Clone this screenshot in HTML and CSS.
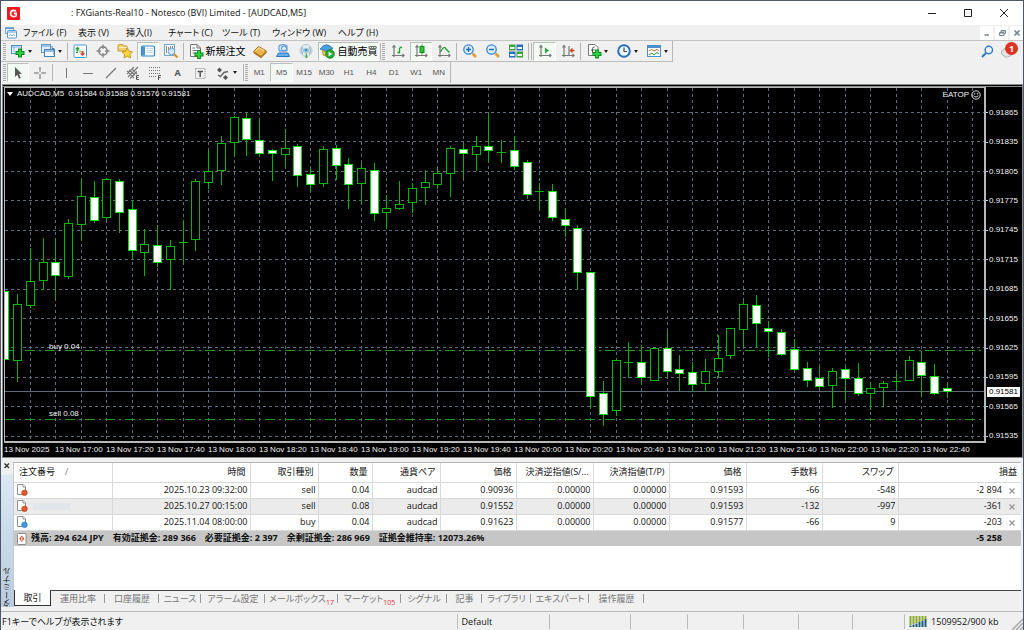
FILE: index.html
```html
<!DOCTYPE html>
<html lang="ja">
<head>
<meta charset="utf-8">
<title>FXGiants-Real10 - Notesco (BVI) Limited - [AUDCAD,M5]</title>
<link rel="stylesheet" href="styles.css">
</head>
<body>
<div class="window">
  <header class="titlebar">
    <svg class="logo" viewBox="0 0 13 13"><rect width="13" height="13" rx="1" fill="#f0191c"/><path d="M9 4.6Q8 3.4 6.4 3.4 3.6 3.6 3.6 6.5 3.7 9.5 6.5 9.6 8 9.6 9.2 8.9V6.4H6.8" fill="none" stroke="#fff" stroke-width="1.6"/></svg>
    <h1 class="caption">: FXGiants-Real10 - Notesco (BVI) Limited - [AUDCAD,M5]</h1>
    <div class="winbtns">
      <button aria-label="最小化"><svg viewBox="0 0 10 10"><path d="M1 5.5H9" /></svg></button>
      <button aria-label="最大化"><svg viewBox="0 0 10 10"><path d="M1.5 1.5H8.5V8.5H1.5Z" /></svg></button>
      <button aria-label="閉じる"><svg viewBox="0 0 10 10"><path d="M1 1L9 9M9 1L1 9" /></svg></button>
    </div>
  </header>

  <nav class="menubar">
    <svg class="menuicon" viewBox="0 0 12 12"><rect x=".5" y=".5" width="8" height="6" fill="#e8f2fa" stroke="#7aa9d2"/><path d="M1 1.5H8" stroke="#5b97cf"/><rect x="2.5" y="3.5" width="9" height="7.5" rx="1" fill="#fff" stroke="#5b97cf"/><path d="M3 5H11" stroke="#5b97cf"/><path d="M4 9L5.5 7 7 9 8.500 7 10 9" fill="none" stroke="#8db8dc"/></svg>
    <button class="m1">ファイル (F)</button><button class="m2">表示 (V)</button><button class="m3">挿入(I)</button><button class="m4">チャート (C)</button><button class="m5">ツール (T)</button><button class="m6">ウィンドウ (W)</button><button class="m7">ヘルプ (H)</button>
    <div class="mdi">
      <button aria-label="チャート最小化"><svg viewBox="0 0 8 8"><path d="M1.500 6H6" stroke-width="1.500"/></svg></button>
      <button aria-label="チャート復元"><svg viewBox="0 0 8 8"><path d="M3 3V1.500H7.500V4.500H6M2 3.500H6V6.500H1.500V3.500M1.500 4H6M3 2H7" /></svg></button>
      <button aria-label="チャートを閉じる"><svg viewBox="0 0 8 8"><path d="M1.500 1.500L6.500 6.500M6.500 1.500L1.500 6.500" stroke-width="1.600"/></svg></button>
    </div>
  </nav>

  <div class="toolbars">
    <div class="toolbar">
      <div class="band upper">
      <i class="grip"></i>
      <div class="group g-new">
        <button class="drop" aria-label="新規チャート"><svg viewBox="0 0 16 16"><rect x="1.500" y="2.500" width="10" height="8" fill="#eef6fc" stroke="#4f8fc8"/><path d="M2 4H11M4 4V9" stroke="#7fb0da"/><path d="M10 5.500V14.500M5.500 10H14.500" stroke="#0b8a1b" stroke-width="4"/><path d="M10 6.500V13.500M6.500 10H13.500" stroke="#2fd043" stroke-width="2"/></svg><i class="caret"></i></button>
        <button class="drop" aria-label="プロファイル"><svg viewBox="0 0 16 16"><rect x="1.500" y="1.500" width="9" height="8" fill="#dfeefa" stroke="#5f98cc"/><path d="M2 3H10" stroke="#5f98cc"/><rect x="4.500" y="6.500" width="10" height="7" fill="#f4f9fd" stroke="#4381bf"/><path d="M5 8H14" stroke="#4381bf"/><path d="M12 3V5.500H14V12" stroke="#4381bf" fill="none"/></svg><i class="caret"></i></button>
      </div>
      <i class="sep"></i>
      <div class="group g-view">
        <button aria-label="気配値表示"><svg viewBox="0 0 16 16"><rect x="2" y="2" width="12.500" height="12.500" rx="1" fill="#fff" stroke="#4f9bd6"/><path d="M5.500 3.500L8 6.200H6.500V8.500H4.500V6.200H3Z" fill="#1aa32c"/><path d="M8 7.500V9.500M4 9.500H6" stroke="#1aa32c"/><path d="M10.500 13L7.800 10.500H9.500V8H11.500V10.500H13.200Z" fill="#df3a2a"/></svg></button>
        <button aria-label="データウィンドウ"><svg viewBox="0 0 16 16"><circle cx="8" cy="8" r="4.200" fill="none" stroke="#888" stroke-width="1.700"/><path d="M8 1.500V6M8 10V14.500M1.500 8H6M10 8H14.500" stroke="#888" stroke-width="1.400"/></svg></button>
        <button aria-label="ナビゲーター"><svg viewBox="0 0 16 16"><path d="M1 3Q1 1.500 3 1.500H6L7 3H10V8H1Z" fill="#f5cf6b" stroke="#b98a2c" stroke-width=".8"/><path d="M2 4.500H10" stroke="#fff0b8"/><path d="M10.300 4.800L12.100 8.300 15.500 8.800 13 11.300 13.600 15 10.300 13.200 7 15 7.600 11.300 5 8.800 8.500 8.300Z" fill="#fbd63c" stroke="#ba8412" stroke-width=".8"/></svg></button>
        <button class="on" aria-label="ターミナル"><svg viewBox="0 0 16 16"><rect x="1.500" y="3" width="13" height="10" rx="1" fill="#f5faff" stroke="#3f88c5" stroke-width="1.200"/><rect x="2" y="3.500" width="3" height="9" fill="#4b93d0"/><path d="M6.500 5.500H13M6.500 7.500H13M6.500 9.500H13" stroke="#c4dcf0"/></svg></button>
        <button aria-label="ストラテジーテスター"><svg viewBox="0 0 16 16"><rect x="1.500" y="1.500" width="10" height="11" fill="#f4f9fd" stroke="#74a6d2"/><path d="M3.500 3V10M5.500 4V7M7.500 3V8M9.500 3V6" stroke="#888"/><circle cx="8.500" cy="8.500" r="3.300" fill="#cde7f8" fill-opacity=".8" stroke="#6fa6d0"/><path d="M11 11L14.500 14.500" stroke="#cf9a2c" stroke-width="2.200"/></svg></button>
      </div>
      <i class="sep"></i>
      <div class="group g-order">
        <button class="text t-order"><svg viewBox="0 0 16 16"><path d="M2.500 1.500H9L12.500 5V13.500H2.500Z" fill="#fafafa" stroke="#777"/><path d="M9 1.500V5H12.500M4.500 5H7M4.500 7.500H9M4.500 10H8" stroke="#777" fill="none"/><path d="M11 7V16M6.500 11.500H15.500" stroke="#0b8a1b" stroke-width="3.800"/><path d="M11 8V15M7.500 11.500H14.500" stroke="#2fd043" stroke-width="2"/></svg>新規注文</button>
        <button aria-label="メタエディター"><svg viewBox="0 0 16 16"><path d="M1.500 8.500L6.500 3.500 14.500 8 9 13.500Z" fill="#e8b54a" stroke="#a9711a"/><path d="M3.500 8L7 4.800 12 7.600" stroke="#ffe5a0" fill="none"/><path d="M1.500 9.500L9 14.500 14.500 9" stroke="#a9711a" fill="none" stroke-width="1.200"/></svg></button>
        <button aria-label="MQL5コミュニティ"><svg viewBox="0 0 16 16"><path d="M4 2.500Q8 .5 12 2.500V8H4Z" fill="#c8e2f6" stroke="#4f8fd0"/><circle cx="9" cy="5.500" r="2.500" fill="#d8ebfa" stroke="#4a8fd5"/><path d="M1.500 13.500L3.500 10H13L14.500 13.500Z" fill="#67aee8" stroke="#2f76c0"/></svg></button>
        <button aria-label="シグナル"><svg viewBox="0 0 16 16"><circle cx="8" cy="7.500" r="6" fill="#e1edf2" stroke="#b7c8d2"/><path d="M4.500 4Q2.500 7.500 4.500 11M6.300 5.300Q5 7.500 6.300 9.700M11.500 4Q13.500 7.500 11.500 11M9.700 5.300Q11 7.500 9.700 9.700" fill="none" stroke="#7fa6bd"/><circle cx="8" cy="7" r="1.500" fill="#3b8bc4"/><path d="M8 7.500L9.500 15H7.500Z" fill="#3aa84c"/></svg></button>
        <button class="text on t-auto"><svg viewBox="0 0 16 16"><path d="M1 6Q3 4 4 3 8 .5 11 3L14 5.500 8 8.500Z" fill="#4b9fe0" stroke="#2670b0" stroke-width=".8"/><path d="M3.500 7.500L8 9.500 12 7.500V12Q7 14.500 4 12Z" fill="#f1c75a" stroke="#b48620" stroke-width=".8"/><circle cx="11" cy="11" r="4.200" fill="#27b138" stroke="#0e8420"/><path d="M9.600 8.800L13.200 11 9.600 13.200Z" fill="#fff"/></svg>自動売買</button>
      </div>
      <i class="sep"></i><i class="grip"></i>
      <div class="group g-type">
        <button aria-label="バーチャート"><svg viewBox="0 0 16 16"><path class="ax" d="M4 3V14M2 12.500H14M2.500 4.500L4 2.500 5.500 4.500M12.500 11L14 12.500 12.500 14"/><path d="M9.500 5V10.500M7.500 9.500H9.500M9.500 4.500H12" stroke="#19a12d" stroke-width="1.300"/></svg></button>
        <button class="on" aria-label="ローソク足"><svg viewBox="0 0 16 16"><path class="ax" d="M4 3V14M2 12.500H14M2.500 4.500L4 2.500 5.500 4.500M12.500 11L14 12.500 12.500 14"/><path d="M9 1.500V11.500" stroke="#138a22"/><rect x="7" y="3.500" width="4" height="6" fill="#2fc441" stroke="#138a22"/></svg></button>
        <button aria-label="ラインチャート"><svg viewBox="0 0 16 16"><path class="ax" d="M4 3V14M2 12.500H14M2.500 4.500L4 2.500 5.500 4.500M12.500 11L14 12.500 12.500 14"/><path d="M4.500 9Q8 2 10 6L13.500 9.500" fill="none" stroke="#19a12d" stroke-width="1.300"/></svg></button>
      </div>
      <i class="sep"></i>
      <div class="group g-zoom">
        <button aria-label="ズームイン"><svg viewBox="0 0 16 16"><path d="M10.500 10.500L14 14" stroke="#d9a431" stroke-width="2.600"/><circle cx="6.500" cy="6.500" r="4.700" fill="#d9eefb" stroke="#3a86cc" stroke-width="1.300"/><path d="M4 6.500H9M6.500 4V9" stroke="#2472bc" stroke-width="1.500"/></svg></button>
        <button aria-label="ズームアウト"><svg viewBox="0 0 16 16"><path d="M10.500 10.500L14 14" stroke="#d9a431" stroke-width="2.600"/><circle cx="6.500" cy="6.500" r="4.700" fill="#d9eefb" stroke="#3a86cc" stroke-width="1.300"/><path d="M4 6.500H9" stroke="#2472bc" stroke-width="1.500"/></svg></button>
        <button aria-label="チャートを整列"><svg viewBox="0 0 16 16"><rect x="1" y="1.500" width="6.500" height="6" fill="#3fa535"/><rect x="8.500" y="1.500" width="6.500" height="6" fill="#2b6fc4"/><rect x="1" y="8.500" width="6.500" height="6" fill="#2b6fc4"/><rect x="8.500" y="8.500" width="6.500" height="6" fill="#3fa535"/><path d="M2 5H6.500M9.500 5H14M2 12H6.500M9.500 12H14" stroke="#eef8ff" stroke-width="2.200"/></svg></button>
      </div>
      <i class="sep"></i><i class="sep"></i>
      <div class="group g-shift">
        <button class="on" aria-label="自動スクロール"><svg viewBox="0 0 16 16"><path class="ax" d="M4 3V14M2 12.500H14M2.500 4.500L4 2.500 5.500 4.500M12.500 11L14 12.500 12.500 14"/><path d="M8 4.500L12 7.500 8 10.500Z" fill="#1fae34"/></svg></button>
        <button aria-label="チャートシフト"><svg viewBox="0 0 16 16"><path class="ax" d="M4 3V14M2 12.500H14M2.500 4.500L4 2.500 5.500 4.500M12.500 11L14 12.500 12.500 14M9 3V12"/><path d="M14.500 7.500H10.500M12.500 5.500L10.500 7.500 12.500 9.500" stroke="#c5481c" fill="none" stroke-width="1.300"/></svg></button>
      </div>
      <i class="sep"></i>
      <div class="group g-tmpl">
        <button class="drop" aria-label="インディケータ"><svg viewBox="0 0 16 16"><path d="M2.500 1.500H9L12 4.500V12.500H2.500Z" fill="#fafafa" stroke="#777"/><path d="M6.500 10V5.500Q6.500 4 8.500 4M5 7H8.500" stroke="#555" fill="none"/><path d="M11 6.500V15.500M6.500 11H15.500" stroke="#0b8a1b" stroke-width="3.800"/><path d="M11 7.500V14.500M7.500 11H14.500" stroke="#2fd043" stroke-width="2"/></svg><i class="caret"></i></button>
        <button class="drop" aria-label="時間足設定"><svg viewBox="0 0 16 16"><circle cx="8" cy="8" r="5.800" fill="#eaf5fd" stroke="#2c6fb8" stroke-width="2"/><path d="M8 4.500V8.500H11" stroke="#445" fill="none" stroke-width="1.200"/></svg><i class="caret"></i></button>
        <button class="drop" aria-label="定型チャート"><svg viewBox="0 0 16 16"><rect x="1.500" y="2.500" width="13" height="11" fill="#f7fbff" stroke="#4f8fc8"/><path d="M2 4H14" stroke="#4f8fc8" stroke-width="2"/><path d="M3 8L5.500 6.500 8 8 11 6.500 13 7.500" stroke="#c5702c" fill="none"/><path d="M3 12L6 10 8 12 11 9.500 13 11" stroke="#2d9a3c" fill="none"/></svg><i class="caret"></i></button>
      </div>
      </div>
      <div class="right">
        <button aria-label="検索"><svg viewBox="0 0 16 16"><circle cx="9.800" cy="6" r="3.700" fill="#eef6fd" stroke="#2f74c6" stroke-width="1.400"/><path d="M7 9L3 13" stroke="#2f74c6" stroke-width="2.200"/></svg></button>
        <button class="news" aria-label="通知 1"><svg viewBox="0 0 16 16"><ellipse cx="7" cy="8.500" rx="5.500" ry="4.200" fill="#e4e4e4" stroke="#a9a9a9"/><path d="M5 12L5.500 15 9 12Z" fill="#d0d0d0"/></svg><span class="badge">1</span></button>
      </div>
    </div>

    <div class="toolbar">
      <div class="band">
      <i class="grip"></i>
      <div class="group g-cur">
        <button class="on" aria-label="カーソル"><svg viewBox="0 0 16 16"><path d="M5 2L12 9H9L10.700 13 9 13.800 7.300 9.800 5 12Z" fill="#555"/></svg></button>
        <button aria-label="クロスヘア"><svg viewBox="0 0 16 16"><path d="M8 2V6.800M8 9.200V14M2 8H6.800M9.200 8H14" stroke="#666"/></svg></button>
      </div>
      <i class="sep"></i>
      <div class="group g-draw">
        <button aria-label="垂直線"><svg viewBox="0 0 16 16"><path d="M8.500 3V13" stroke="#777"/></svg></button>
        <button aria-label="水平線"><svg viewBox="0 0 16 16"><path d="M3 8.500H13" stroke="#777"/></svg></button>
        <button aria-label="トレンドライン"><svg viewBox="0 0 16 16"><path d="M3 13L13 3" stroke="#777" stroke-width="1.200"/></svg></button>
        <button aria-label="等距離チャネル"><svg viewBox="0 0 16 16"><path d="M2 9L9 2M3 12L13 2M5 13.500L12 6.500M2 6L9 13M4 5L10 10M7 4L12 9" stroke="#777" stroke-width="1.100"/><path d="M14 10.500H11.500V14.500H14M11.500 12.500H13.500" stroke="#555" fill="none"/></svg></button>
        <button aria-label="フィボナッチ"><svg viewBox="0 0 16 16"><path d="M2 2.500H14M2 5.500H14M2 8.500H14M2 11.500H9" stroke="#777" stroke-dasharray="1 1"/><path d="M14 10.500H11.500V15M11.500 12.500H13.500" stroke="#555" fill="none"/></svg></button>
        <button class="letter">A</button>
        <button aria-label="テキストラベル"><svg viewBox="0 0 16 16"><rect x="3.500" y="3.500" width="9.500" height="10" fill="none" stroke="#888" stroke-dasharray="1 1"/><path d="M5.500 6.500H11M8.200 6.500V12" stroke="#555" stroke-width="1.500"/></svg></button>
        <button class="drop" aria-label="矢印"><svg viewBox="0 0 16 16"><path d="M2 5L4.500 2.500 7 5 4.500 7.500ZM8 12.500L10.500 10 13 12.500 10.500 15Z" fill="#555"/><path d="M3 10L5.500 11.500 9 7.500 13 6.500" fill="none" stroke="#666" stroke-width="1.400"/></svg><i class="caret"></i></button>
      </div>
      <i class="sep"></i><i class="grip"></i>
      <div class="group g-tf">
        <button>M1</button><button class="on">M5</button><button>M15</button><button>M30</button><button>H1</button><button>H4</button><button>D1</button><button>W1</button><button>MN</button>
      </div>
      </div>
    </div>
  </div>

  <main class="chart">
    <div class="plot">
      <svg id="plot" viewBox="5 88 979 353" preserveAspectRatio="none"></svg>
      <p class="symbol"><i class="caret light"></i><span>AUDCAD,M5</span><span>0.91584 0.91588 0.91576 0.91581</span></p>
      <p class="expert">EATOP <svg viewBox="0 0 10 10"><circle cx="5" cy="5" r="4.200"/><circle cx="3.500" cy="3.800" r=".4"/><circle cx="6.500" cy="3.800" r=".4"/><path d="M2.500 5.800Q5 8.500 7.500 5.800"/></svg></p>
      <p class="order buy">buy 0.04</p>
      <p class="order sell">sell 0.08</p>
    </div>
    <ol class="prices">
      <li>0.91865</li><li>0.91835</li><li>0.91805</li><li>0.91775</li><li>0.91745</li><li>0.91715</li><li>0.91685</li><li>0.91655</li><li>0.91625</li><li>0.91595</li><li>0.91565</li><li>0.91535</li>
      <li class="current">0.91581</li>
    </ol>
    <ol class="times">
      <li>13 Nov 2025</li><li>13 Nov 17:00</li><li>13 Nov 17:20</li><li>13 Nov 17:40</li><li>13 Nov 18:00</li><li>13 Nov 18:20</li><li>13 Nov 18:40</li><li>13 Nov 19:00</li><li>13 Nov 19:20</li><li>13 Nov 19:40</li><li>13 Nov 20:00</li><li>13 Nov 20:20</li><li>13 Nov 20:40</li><li>13 Nov 21:00</li><li>13 Nov 21:20</li><li>13 Nov 21:40</li><li>13 Nov 22:00</li><li>13 Nov 22:20</li><li>13 Nov 22:40</li>
    </ol>
  </main>

  <section class="terminal">
    <aside class="side">
      <button aria-label="ターミナルを閉じる"><svg viewBox="0 0 8 8"><path d="M1.500 1.500L6 6M6 1.500L1.500 6" stroke="#333" stroke-width="1.400"/></svg></button>
      <span>ターミナル</span>
    </aside>
    <div class="pane">
      <table class="trades">
        <colgroup><col class="c98"><col class="c138"><col class="c68"><col class="c54"><col class="c68"><col class="c76"><col class="c77"><col class="c76"><col class="c77"><col class="c76"><col class="c76"><col></colgroup>
        <thead><tr><th class="first">注文番号<span class="sort">/</span></th><th>時間</th><th>取引種別</th><th>数量</th><th>通貨ペア</th><th>価格</th><th>決済逆指値(S/...</th><th>決済指値(T/P)</th><th>価格</th><th>手数料</th><th>スワップ</th><th>損益</th></tr></thead>
        <tbody>
          <tr><td class="first"><svg viewBox="0 0 12 12"><path class="doc" d="M1.500.5H7L9.500 3V10.500H1.500Z"/><path class="doc" d="M7 .5V3H9.500"/><circle cx="8.500" cy="8.800" r="2.800" fill="#e2572b" stroke="#b23c12" stroke-width=".6"/></svg></td><td>2025.10.23 09:32:00</td><td>sell</td><td>0.04</td><td>audcad</td><td>0.90936</td><td>0.00000</td><td>0.00000</td><td>0.91593</td><td>-66</td><td>-548</td><td>-2 894<button class="x" aria-label="決済"><svg viewBox="0 0 8 8"><path d="M1.500 1.500L6.500 6.500M6.500 1.500L1.500 6.500"/></svg></button></td></tr>
          <tr class="alt"><td class="first"><svg viewBox="0 0 12 12"><path class="doc" d="M1.500.5H7L9.500 3V10.500H1.500Z"/><path class="doc" d="M7 .5V3H9.500"/><circle cx="8.500" cy="8.800" r="2.800" fill="#e2572b" stroke="#b23c12" stroke-width=".6"/></svg><span class="masked"></span></td><td>2025.10.27 00:15:00</td><td>sell</td><td>0.08</td><td>audcad</td><td>0.91552</td><td>0.00000</td><td>0.00000</td><td>0.91593</td><td>-132</td><td>-997</td><td>-361<button class="x" aria-label="決済"><svg viewBox="0 0 8 8"><path d="M1.500 1.500L6.500 6.500M6.500 1.500L1.500 6.500"/></svg></button></td></tr>
          <tr><td class="first"><svg viewBox="0 0 12 12"><path class="doc" d="M1.500.5H7L9.500 3V10.500H1.500Z"/><path class="doc" d="M7 .5V3H9.500"/><circle cx="8.500" cy="8.800" r="2.800" fill="#3d9be6" stroke="#1c6db5" stroke-width=".6"/></svg></td><td>2025.11.04 08:00:00</td><td>buy</td><td>0.04</td><td>audcad</td><td>0.91623</td><td>0.00000</td><td>0.00000</td><td>0.91577</td><td>-66</td><td>9</td><td>-203<button class="x" aria-label="決済"><svg viewBox="0 0 8 8"><path d="M1.500 1.500L6.500 6.500M6.500 1.500L1.500 6.500"/></svg></button></td></tr>
        </tbody>
        <tfoot><tr><td class="first" colspan="11"><svg viewBox="0 0 12 12"><rect x="1.500" y=".5" width="8.500" height="11" rx="1" fill="#fff" stroke="#8a8a8a"/><path d="M5.800 2.500L8.300 5.500 5.800 9 3.300 5.500Z" fill="#d6502a"/><path d="M5.800 4V7.500" stroke="#fff"/></svg><span>残高: 294 624 JPY</span><span>有効証拠金: 289 366</span><span>必要証拠金: 2 397</span><span>余剰証拠金: 286 969</span><span>証拠金維持率: 12073.26%</span></td><td>-5 258</td></tr></tfoot>
      </table>
      <div class="tabs" role="tablist">
        <button class="active" role="tab">取引</button><button role="tab">運用比率</button><button role="tab">口座履歴</button><button role="tab">ニュース</button><button role="tab">アラーム設定</button><button role="tab">メールボックス<sub>17</sub></button><button role="tab">マーケット<sub>105</sub></button><button role="tab">シグナル</button><button role="tab">記事</button><button role="tab">ライブラリ</button><button role="tab">エキスパート</button><button role="tab">操作履歴</button>
      </div>
    </div>
  </section>

  <footer class="status">
    <span>F1キーでヘルプが表示されます</span><span>Default</span><span></span><span></span><span></span><span></span><span></span>
    <span class="last"></span>
    <span class="net"><svg viewBox="0 0 19 11"><path d="M1.500 0V9M4.500 0V8M7.500 0V7M10.500 0V6M13.500 0V5M16.500 0V3" stroke="#8cab2e" stroke-width="2"/><path d="M1.500 9.500V11M4.500 8.500V11M7.500 7.500V11M10.500 6V11M13.500 5V11M16.500 3V11" stroke="#1d5d7c" stroke-width="2"/></svg>1509952/900 kb</span>
    <svg class="resize" viewBox="0 0 12 12"><path d="M1 12L12 1M5 12L12 5M9 12L12 9" stroke="#a6a6a6" stroke-width="1.500"/></svg>
  </footer>
</div>
<script src="chart.js"></script>
</body>
</html>
```
FILE: styles.css
```css
* { box-sizing: border-box; }
html, body { height: 100%; }
body { margin: 0; background: #f0f0f0; color: #111; font: 9px/12px "Open Sans", "Noto Sans CJK JP", sans-serif; font-feature-settings: "palt"; }
h1, p, ol { margin: 0; padding: 0; font: inherit; list-style: none; }
button { margin: 0; padding: 0; border: 0; background: none; color: inherit; font: inherit; font-feature-settings: inherit; white-space: nowrap; }
svg { display: block; flex: none; }
.window { display: flex; flex-direction: column; min-height: 100%; border: 1px solid #4c5664; border-width: 1px 1px 0; }

.titlebar { display: flex; align-items: center; height: 24px; padding: 0 1px 0 6px; background: #fff; }
.logo { width: 13px; height: 13px; }
.caption { flex: 1; padding-left: 51px; font-size: 9px; white-space: nowrap; }
.winbtns { display: flex; }
.winbtns button { display: grid; place-items: center; width: 36px; height: 24px; }
.winbtns svg { width: 10px; height: 10px; fill: none; stroke: #222; }

.menubar { display: flex; align-items: center; height: 16px; padding-left: 4px; border-bottom: 1px solid #c4c4c4; }
.menuicon { width: 12px; height: 12px; margin-right: 6px; }
.menubar > button { text-align: left; }
.m1 { width: 55px; }
.m2 { width: 48px; }
.m3 { width: 42px; }
.m4 { width: 54px; }
.m5 { width: 50px; }
.m6 { width: 66px; }
.mdi { display: flex; gap: 2px; margin-left: auto; }
.mdi button { display: grid; place-items: center; width: 13px; height: 14px; background: #fff; }
.mdi svg { width: 8px; height: 8px; fill: none; stroke: #75848f; }

.toolbars { padding-bottom: 1px; }
.toolbar { display: flex; align-items: center; height: 21px; padding-right: 7px; }
.band { display: flex; align-items: center; height: 21px; padding-left: 2px; border-right: 1px solid #b5b5b5; }
.band.upper { border-bottom: 1px solid #bcbcbc; }
.grip { width: 3px; height: 17px; background: repeating-linear-gradient(#aaa 0 1px, transparent 1px 2px); }
.sep { width: 1px; height: 17px; margin: 0 1px; background: #b5b5b5; }
.group { display: flex; align-items: center; height: 20px; }
.group button { display: flex; flex: 1; align-items: center; justify-content: center; height: 19px; border: 1px solid transparent; }
.group .on { border-color: #b9c0ba #fff #fff #b9c0ba; background: #f2faf3; }
.group svg { width: 16px; height: 16px; }
.caret { margin-left: 2px; border: 2px solid transparent; border-top: 3px solid #222; border-bottom: 0; }
.ax { fill: none; stroke: #777; stroke-width: 1.2; }
.g-new { width: 60px; }
.g-view { width: 113px; }
.g-order { width: 194px; }
.g-order .text { flex: none; gap: 2px; color: #000; font-size: 10px; font-feature-settings: normal; }
.g-order .t-order { width: 63px; }
.g-order .t-auto { width: 61px; }
.g-type { width: 68px; margin-left: 2px; }
.g-zoom { width: 68px; margin-left: 1px; }
.g-shift { width: 46px; }
.g-tmpl { width: 90px; }
.right { display: flex; gap: 5px; margin-left: auto; }
.right svg { width: 16px; height: 16px; }
.news { position: relative; }
.badge { position: absolute; top: -2px; left: 5px; width: 13px; height: 13px; border-radius: 50%; background: #dc3420; color: #fff; font-weight: 700; line-height: 13px; }
.g-cur { width: 44px; margin-left: 1px; }
.g-draw { width: 187px; margin-left: 1px; }
.g-draw .drop { flex: none; width: 31px; }
.g-draw .letter { color: #555; font-weight: 700; }
.g-tf { width: 202px; color: #555; font: 8px/12px "Liberation Sans", sans-serif; }

.chart { display: grid; flex: 1; grid-template: minmax(200px, 1fr) 14px / 1fr 36px; margin-left: 1px; padding-left: 1px; border: 1px solid #8b8f8b; border-top: 3px double #8b8f8b; background: #000; color: #f2f2f2; font: 8px/10px "Liberation Sans", sans-serif; }
.plot { position: relative; border: 1px solid #b8b8b8; border-width: 1px 2px 2px 1px; }
.plot > svg { position: absolute; inset: 0; width: 100%; height: 100%; }
.grid { fill: none; stroke: #5e6d7e; stroke-dasharray: 3 3; }
.wick { stroke: #00b400; }
.body { stroke: #00b800; fill: #000; }
.body.down { stroke: #00e000; fill: #fff; }
.level { stroke: #1f9a1f; stroke-dasharray: 10 4 2 4; }
.quote { stroke: #5d6a78; }
.symbol { position: absolute; top: 1px; left: 2px; display: flex; align-items: center; gap: 4px; }
.caret.light { margin: 0; border-width: 4px 3px 0; border-top-color: #fff; }
.expert { position: absolute; top: 2px; right: 3px; display: flex; align-items: center; gap: 2px; }
.expert svg { width: 10px; height: 10px; fill: none; stroke: #eee; stroke-width: .9; }
.order { position: absolute; left: 44px; }
.order.buy { top: 72%; }
.order.sell { top: 91%; }
.prices { position: relative; display: grid; grid-row: 1 / 3; grid-column: 2; grid-template-rows: repeat(12, 1fr); align-items: center; padding: 11px 0 6px; }
.prices li { display: flex; align-items: center; gap: 1px; }
.prices li::before { width: 2px; height: 1px; background: #ccc; content: ""; }
.prices .current { position: absolute; top: 81%; right: 2px; left: 1px; height: 10px; padding-left: 2px; background: #fff; color: #000; }
.prices .current::before { display: none; }
.times { display: grid; grid-template-columns: repeat(19, 51fr) 13fr; align-items: center; white-space: nowrap; }
.times li { width: 0; }

.terminal { display: flex; height: 153px; padding: 4px 2px 4px 0; }
.side { display: flex; flex-direction: column; align-items: center; justify-content: space-between; width: 12px; background: linear-gradient(#f0f0f0 12px, #dce8f4 13px, #b7cbdf); }
.side button svg { width: 8px; height: 8px; }
.side span { font-size: 8px; line-height: 10px; writing-mode: vertical-rl; rotate: 180deg; }
.pane { display: flex; flex: 1; flex-direction: column; min-width: 0; border-top: 1px solid #b5b5b5; border-left: 1px solid #c8c8c8; background: #fff; }
.trades { width: 100%; border-collapse: collapse; table-layout: fixed; }
.c54 { width: 54px; }
.c68 { width: 68px; }
.c76 { width: 76px; }
.c77 { width: 77px; }
.c98 { width: 98px; }
.c138 { width: 138px; }
.trades th, .trades td { height: 16px; padding: 0 2px 0 0; border-right: 1px solid #d9d9d9; border-bottom: 1px solid #d9d9d9; line-height: 12px; text-align: right; white-space: nowrap; }
.trades th { height: 19px; padding-right: 4px; font-weight: 400; }
.trades .first { text-align: left; }
.trades th.first { padding-left: 5px; }
.trades th:last-child, .trades td:last-child { border-right: 0; }
.trades tbody td:last-child { padding-right: 5px; }
.sort { margin-left: 10px; color: #777; }
.trades .first svg { display: inline-block; width: 12px; height: 12px; margin-left: 2px; vertical-align: middle; }
.doc { fill: #fff; stroke: #777; stroke-width: .8; }
.masked { display: inline-block; width: 37px; height: 7px; margin-left: 5px; background: #e2e6ea; vertical-align: middle; }
.alt { background: #ebebeb; }
.x { margin-left: 6px; vertical-align: middle; }
.x svg { width: 8px; height: 8px; stroke: #999; stroke-width: 1.400; }
.trades tfoot td { border: 0; background: #c6c6c6; font-weight: 700; }
.trades tfoot span { margin-left: 3px; }
.trades tfoot span + span { margin-left: 9px; }
.trades tfoot td:last-child { padding-right: 19px; }
.tabs { display: grid; grid-template-columns: 37px 54px 54px 42px 64px 73px 63px 46px 35px 49px 58px 55px; height: 17px; margin-top: auto; border-top: 1px solid #444; background: #f0f0f0; color: #777; }
.tabs button { position: relative; }
.tabs button:not(.active)::after { position: absolute; top: 3px; right: 0; width: 1px; height: 9px; background: #999; content: ""; }
.tabs .active { height: 16px; margin-top: -1px; border: 1px solid #333; border-top: 0; background: #fff; color: #111; }
.tabs sub { color: #f03030; font-size: 7px; line-height: 1; }

.status { display: grid; grid-template-columns: 457fr 93fr 81fr 57fr 56fr 55fr 54fr 52fr 104fr 14fr; height: 19px; align-items: center; border-top: 1px solid #bbb; }
.status > span { height: 15px; padding-left: 1px; border-right: 1px solid #bbb; line-height: 15px; white-space: nowrap; }
.status > span + span { padding-left: 4px; }
.status .net { display: flex; align-items: center; gap: 3px; border: 0; }
.net svg { width: 19px; height: 11px; }
.resize { width: 12px; height: 12px; align-self: end; justify-self: end; }
```
FILE: chart.js
```js
// Each row: high, body top, body bottom, low, kind (u = hollow, d = filled, x = flat).
const candles = [
[269,291,359,360,'d'],[294,304,360,381,'u'],[248,281,305,307,'u'],[238,262,280,289,'u'],[238,262,275,298,'d'],
[219,223,276,278,'u'],[178,196,224,240,'u'],[181,197,220,222,'d'],[178,179,217,219,'u'],[179,181,212,232,'d'],
[200,209,250,257,'d'],[229,244,252,275,'u'],[225,245,262,266,'d'],[240,246,259,289,'u'],[220,242,242,262,'x'],
[179,181,239,250,'u'],[150,171,182,188,'u'],[136,143,170,184,'u'],[116,117,142,156,'u'],[112,118,139,155,'d'],
[119,140,153,156,'d'],[149,150,153,180,'d'],[129,148,154,166,'u'],[144,146,175,186,'d'],[167,174,184,191,'d'],
[146,149,183,186,'u'],[145,148,165,179,'d'],[158,164,184,208,'d'],[163,168,183,202,'u'],[163,170,213,220,'d'],
[195,208,212,228,'u'],[181,204,208,209,'u'],[183,188,202,212,'u'],[170,182,187,204,'u'],[167,173,184,188,'u'],
[146,148,173,196,'u'],[144,149,153,178,'d'],[136,146,154,170,'u'],[114,146,150,162,'d'],[140,152,152,162,'x'],
[136,150,166,169,'d'],[160,162,194,198,'d'],[183,191,191,209,'x'],[184,191,217,220,'d'],[208,219,225,236,'d'],
[225,228,272,289,'d'],[272,272,396,408,'d'],[381,393,414,425,'d'],[359,360,410,415,'u'],[342,362,362,377,'x'],
[345,362,377,384,'d'],[348,348,380,380,'u'],[331,348,371,375,'d'],[355,369,373,390,'d'],[362,372,384,391,'d'],
[359,371,383,391,'u'],[335,358,371,377,'u'],[328,328,355,358,'u'],[301,304,329,346,'u'],[295,305,323,347,'d'],
[321,328,331,356,'d'],[329,332,354,355,'d'],[339,349,369,371,'d'],[362,368,380,386,'d'],[367,378,386,388,'d'],
[368,371,385,407,'u'],[367,369,378,399,'d'],[363,378,393,395,'d'],[382,388,393,409,'u'],[381,383,387,406,'u'],
[373,381,381,389,'x'],[356,360,380,380,'u'],[351,362,375,396,'d'],[364,376,393,394,'d'],[383,388,391,397,'d']
];

const step = 12.735;
const snap = v => Math.floor(v) + 0.5;
const line = (cls, x1, y1, x2, y2) => `<line class="${cls}" x1="${x1}" y1="${y1}" x2="${x2}" y2="${y2}"/>`;
let out = '';

for (let i = 0; i < 38; i++) {
  const x = snap(30.3 + i * step * 2);
  out += line('grid', x, 88, x, 441);
}
for (let i = 0; i < 12; i++) {
  const y = snap(112.5 + i * 29.43);
  out += line('grid', 5, y, 984, y);
}
out += line('level', 5, 350.5, 984, 350.5) + line('level', 5, 419.5, 984, 419.5) + line('quote', 5, 391.5, 984, 391.5);

candles.forEach(([high, top, bottom, low, kind], i) => {
  const x = snap(4.9 + i * step);
  out += line('wick', x, high, x, low + 1);
  if (kind === 'x') out += line('wick', x - 4.5, top + 0.5, x + 4.5, top + 0.5);
  else out += `<rect class="body ${kind === 'd' ? 'down' : 'up'}" x="${x - 4}" y="${top + 0.5}" width="8" height="${bottom - top}"/>`;
});
document.getElementById('plot').innerHTML = out;
```
